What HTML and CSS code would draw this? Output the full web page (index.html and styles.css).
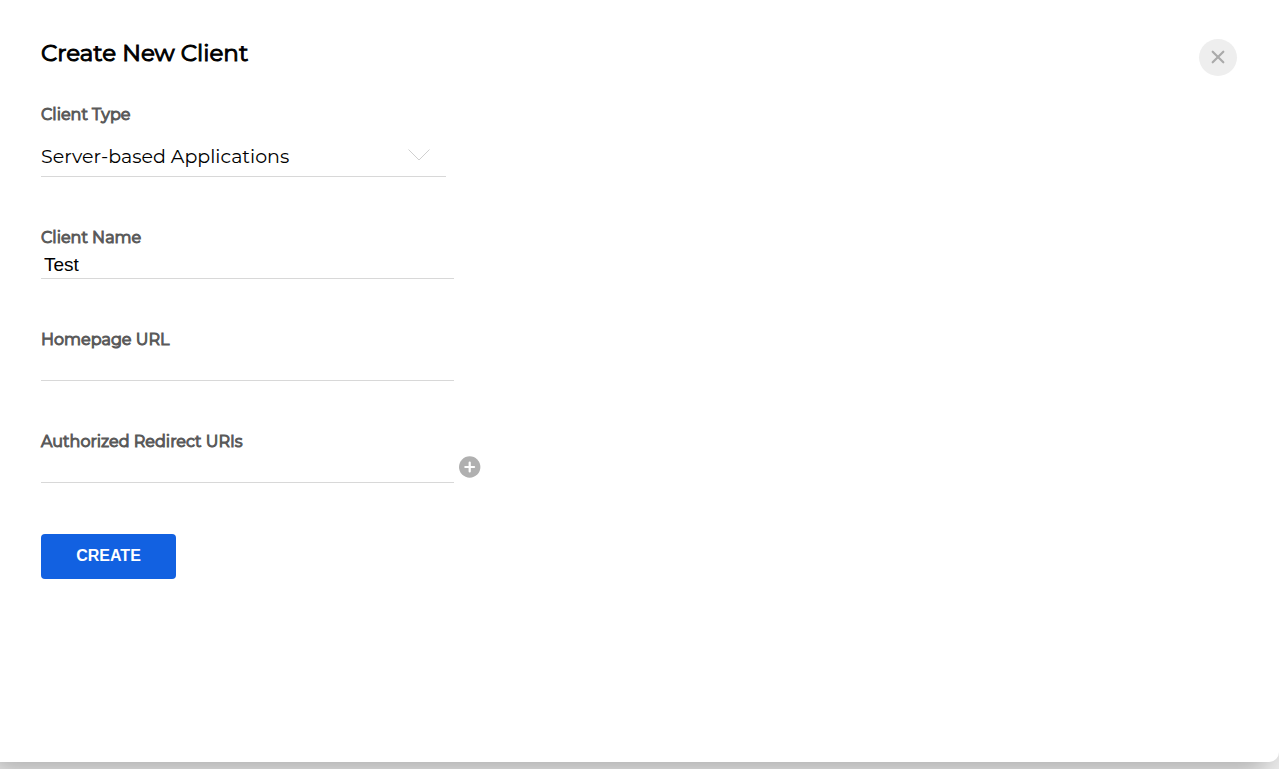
FILE: index.html
```
<!DOCTYPE html>
<html lang="en">
<head>
    <meta charset="UTF-8" />
    <meta name="viewport" content="width=device-width, initial-scale=1.0"/>
    <title>Create New Client</title>
    <link rel="stylesheet" href="styles.css">
</head>
<body>
<main class="panel">
    <header class="panel-header">
        <h1>Create New Client</h1>
        <button type="button" class="close-btn" aria-label="Close">
            <svg width="14" height="14" viewBox="0 0 14 14" fill="none" stroke="#aaa" stroke-width="2.2" stroke-linecap="round">
                <path d="M1.7 1.7 12.3 12.3M12.3 1.7 1.7 12.3"/>
            </svg>
        </button>
    </header>

    <form class="client-form">
        <div class="field">
            <label for="client-type">Client Type</label>
            <div class="select-wrap">
                <select id="client-type" name="client_type">
                    <option>Server-based Applications</option>
                </select>
                <svg class="chevron" width="22" height="12" viewBox="0 0 22 12" fill="none" stroke="#d0d0d0">
                    <path d="M.5.5 11 11 21.5.5"/>
                </svg>
            </div>
        </div>

        <div class="field">
            <label for="client-name">Client Name</label>
            <input type="text" id="client-name" name="client_name" value="Test">
        </div>

        <div class="field">
            <label for="homepage">Homepage URL</label>
            <input type="text" id="homepage" name="homepage_url">
        </div>

        <div class="field">
            <label for="redirect">Authorized Redirect URIs</label>
            <div class="uri-row">
                <input type="text" id="redirect" name="redirect_uri">
                <button type="button" class="add-btn" aria-label="Add URI">
                    <svg width="22" height="22" viewBox="0 0 22 22">
                        <circle cx="10.7" cy="11" r="10.7" fill="#b0b0b0"/>
                        <path d="M10.7 6.6v8.8M6.3 11h8.8" stroke="#fff" stroke-width="2.2" stroke-linecap="round"/>
                    </svg>
                </button>
            </div>
        </div>

        <button type="submit" class="create-btn">CREATE</button>
    </form>
</main>
</body>
</html>
```
FILE: styles.css
```
* {
    box-sizing: border-box;
}
body {
    margin: 0;
    height: 100vh;
    padding-bottom: 7px;
    overflow: hidden;
    background: #f0f0f0;
    font-family: Montserrat, Inter, sans-serif;
}
.panel {
    height: 100%;
    padding: 39px 42px 40px 41px;
    background: #fff;
    border-radius: 0 0 10px 0;
    box-shadow: -10px 8px 30px rgba(0, 0, 0, 0.3);
}
.panel-header {
    display: flex;
    justify-content: space-between;
    align-items: flex-start;
    height: 66px;
}
h1 {
    margin: 0;
    font-size: 23px;
    font-weight: 400;
    line-height: 28px;
    -webkit-text-stroke: 1px;
}
button {
    border: 0;
    padding: 0;
    cursor: pointer;
}
.close-btn {
    display: flex;
    align-items: center;
    justify-content: center;
    width: 38px;
    height: 37px;
    padding-bottom: 2px;
    border-radius: 50%;
    background: #eee;
}
.client-form {
    display: flex;
    flex-direction: column;
    align-items: flex-start;
    gap: 51px;
}
.field {
    display: flex;
    flex-direction: column;
}
label {
    font-size: 16px;
    line-height: 20px;
    color: #5a5a5a;
    -webkit-text-stroke: 1px;
}
select,
input {
    border: 0;
    border-bottom: 1px solid #d8d8d8;
    border-radius: 0;
    background: transparent;
    color: #000;
    outline: none;
}
.select-wrap {
    position: relative;
    width: 405px;
    margin-top: 10px;
}
select {
    width: 100%;
    height: 42px;
    padding: 2px 0 0;
    appearance: none;
    font-family: inherit;
    font-size: 19px;
}
.chevron {
    position: absolute;
    top: 14px;
    right: 16px;
    pointer-events: none;
}
input {
    width: 413px;
    height: 31px;
    padding: 6px 3px 2px;
    font-family: "Liberation Sans", Arial, sans-serif;
    font-size: 19px;
}
.uri-row {
    display: flex;
    align-items: center;
    gap: 5px;
}
.add-btn {
    display: flex;
    padding-bottom: 2px;
    background: none;
}
.create-btn {
    width: 135px;
    height: 45px;
    padding-bottom: 2px;
    border-radius: 4px;
    background: #1261e1;
    color: #fff;
    font-family: "Liberation Sans", Arial, sans-serif;
    font-size: 16px;
    font-weight: 700;
}
```
